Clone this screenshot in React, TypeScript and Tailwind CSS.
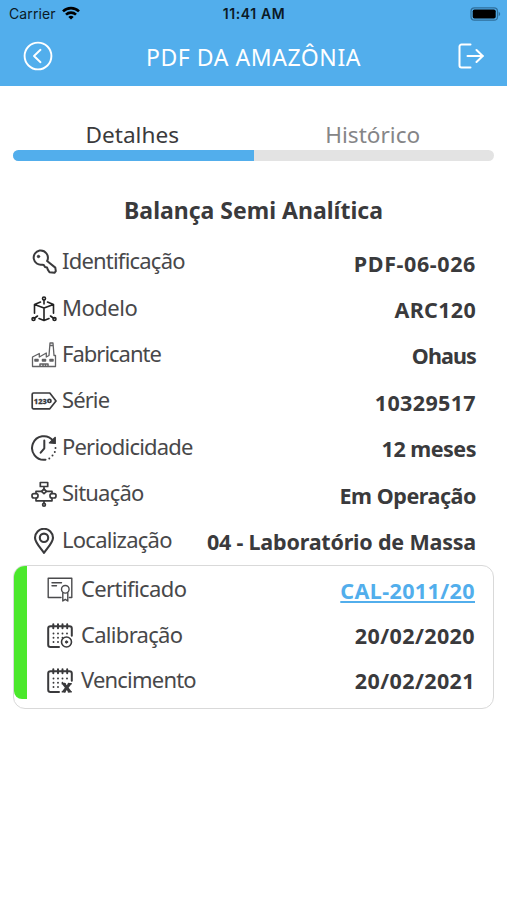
import type { ReactNode } from 'react'

const iconProps = {
  viewBox: '0 0 26 26',
  fill: 'none',
  stroke: '#3a3a3c',
  strokeWidth: 1.6,
  strokeLinecap: 'round' as const,
  strokeLinejoin: 'round' as const,
  className: 'w-[26px] h-[26px] mt-[4px] shrink-0',
}

const KeyIcon = () => (
  <svg {...iconProps} strokeWidth={2}>
    <path d="M8.600 1.500a7.200 7.200 0 1 0 2.600 14.200l1.600.3 1.200 2 2 .4.8 2.200 1.700 2.600 5 .6 1.300-1.600-.5-3.600-8.200-6.600A7.300 7.300 0 0 0 8.600 1.500z" />
    <circle cx="7.500" cy="7.500" r="1.200" fill="#3a3a3c" strokeWidth="1" />
  </svg>
)

const CubeIcon = () => (
  <svg {...iconProps} stroke="#222" strokeWidth={1.6}>
    <path d="M9.500 6 3.500 8.500 13 12l9.500-3.500-6-2.500M3.500 8.500v8.700M22.500 8.500v8.700M13 12v12.500M8 22.500l5 2 5-2M13 4v4M3 22.500l3.500-2.500M23 22.500 19.500 20" />
    <circle cx="13" cy="2.500" r="1.500" />
    <circle cx="2.500" cy="23" r="1.500" />
    <circle cx="23.500" cy="23" r="1.500" />
  </svg>
)

const FactoryIcon = () => (
  <svg {...iconProps} strokeWidth={1.3} stroke="#626264">
    <path d="M1.500 24.500V15l6.800-3.500V15l7-4V15l2.700-1.500L19 1h3l1 12.500h1.500v11zM19 3.500h3" />
    <path d="M4 17.500h3v1.500H4zM11.500 17.500h3v1.500h-3zM19 17.500h3v1.500h-3zM9 24.300V22h8v2.300M12 22v2.300M14.500 22v2.300" strokeWidth="1.500" />
  </svg>
)

const SerialIcon = () => (
  <svg {...iconProps} strokeWidth={1.7}>
    <path d="M2.500 5h16.300l6.200 7.900-6.200 7.900H2.500A1.300 1.300 0 0 1 1.200 19.500V6.300A1.300 1.300 0 0 1 2.500 5z" />
    <text x="2.800" y="15.600" fontSize="7.500" fontWeight="800" fontFamily="Noto Sans, sans-serif" fill="#3a3a3c" stroke="#3a3a3c" strokeWidth=".3" textLength="13" lengthAdjust="spacingAndGlyphs">123</text>
    <circle cx="18.400" cy="12.900" r="1.600" />
  </svg>
)

const PeriodIcon = () => (
  <svg {...iconProps} strokeWidth={2}>
    <path d="M14.500 24.700A11.800 11.800 0 1 1 22 5.500M13.300 5.500v7.800l-3.600 4.400" />
    <path d="M24.300 2.300v6.200l-6-.6z" fill="#3a3a3c" strokeWidth="1.200" />
    <path d="M24.500 13v.1M23.800 17v.1M21.500 20.500v.1M18.300 23.500v.1" strokeWidth="2" />
  </svg>
)

const FlowIcon = () => (
  <svg {...iconProps} strokeWidth={1.700}>
    <path d="M9.300 1.500h7.400v4H9.300zM13 5.500v2.700M10.300 10.300H5v2M15.700 10.300H21v2M5 17.300v2.500h16v-2.500M13 20v2.500" />
    <path d="m13 8 2.500 2.300-2.500 2.300-2.500-2.300z" />
    <rect x="1" y="12.600" width="6" height="4.400" rx="2" />
    <rect x="19" y="12.600" width="6" height="4.400" rx="2" />
    <circle cx="13" cy="23.700" r="1.400" />
  </svg>
)

const PinIcon = () => (
  <svg {...iconProps} strokeWidth={2.100}>
    <path d="M13 24.800C9.300 19.800 4 14.500 4 9.800a9 9 0 0 1 18 0c0 4.700-5.300 10-9 15z" />
    <circle cx="13" cy="9.800" r="4.200" />
  </svg>
)

const CertificateIcon = () => (
  <svg {...iconProps} strokeWidth={1.400} stroke="#4a4a4c">
    <path d="M14 20.500H1.200V1.300h23.600v19.200h-2.500M5 5.700h9.500M5 8.700h4.500" />
    <circle cx="18.300" cy="12.300" r="3.800" />
    <path d="M15.800 16v8l2.500-1.600 2.500 1.600v-8" />
  </svg>
)

const CalendarBase = () => (
  <>
    <path d="M12 24H3.500a2.300 2.300 0 0 1-2.300-2.300V5.500a2.300 2.300 0 0 1 2.300-2.300h19a2.300 2.300 0 0 1 2.300 2.300v7.200M6.300 1.200v4M11 1.200v4M15.500 1.200v4M20.200 1.200v4" />
    <path d="M6.500 10.500v.1M11 10.500v.1M15.500 10.500v.1M20 10.500v.1M6.500 14.700v.1M11 14.700v.1M15.500 14.700v.1M6.500 19v.1M11 19v.1" strokeWidth="1.900" />
  </>
)

const CalibrationIcon = () => (
  <svg {...iconProps} strokeWidth={2}>
    <CalendarBase />
    <circle cx="19.500" cy="19" r="5" strokeWidth="1.600" />
    <circle cx="19.500" cy="19" r="1.200" fill="#3a3a3c" strokeWidth=".8" />
  </svg>
)

const ExpiryIcon = () => (
  <svg {...iconProps} strokeWidth={2}>
    <CalendarBase />
    <path d="m16.500 15.500 6.500 8.300M23 15.500l-6.500 8.300" strokeWidth="3" strokeLinecap="butt" />
    <path d="M14.700 15.700h4M20.800 15.700h4M14.700 23.800h4M20.800 23.800h4" strokeWidth="1.600" strokeLinecap="butt" />
  </svg>
)

type Item = {
  icon: ReactNode
  label: string
  labelClass: string
  value: string
  valueClass: string
  link?: boolean
}

const details: Item[] = [
  { icon: <KeyIcon />, label: 'Identificação', labelClass: 'tracking-[-0.79px]', value: 'PDF-06-026', valueClass: 'tracking-[0.6px]' },
  { icon: <CubeIcon />, label: 'Modelo', labelClass: 'tracking-[-0.5px]', value: 'ARC120', valueClass: 'tracking-[0.3px]' },
  { icon: <FactoryIcon />, label: 'Fabricante', labelClass: 'tracking-[-1px]', value: 'Ohaus', valueClass: 'tracking-[-0.9px]' },
  { icon: <SerialIcon />, label: 'Série', labelClass: 'tracking-[-0.9px]', value: '10329517', valueClass: 'tracking-[0.35px]' },
  { icon: <PeriodIcon />, label: 'Periodicidade', labelClass: 'tracking-[-0.8px]', value: '12 meses', valueClass: 'tracking-[-0.5px]' },
  { icon: <FlowIcon />, label: 'Situação', labelClass: 'tracking-[-0.8px]', value: 'Em Operação', valueClass: 'tracking-[-0.45px]' },
  { icon: <PinIcon />, label: 'Localização', labelClass: 'tracking-[-0.75px]', value: '04 - Laboratório de Massa', valueClass: 'tracking-[-0.2px]' },
]

const certificate: Item[] = [
  { icon: <CertificateIcon />, label: 'Certificado', labelClass: 'tracking-[-0.6px]', value: 'CAL-2011/20', valueClass: 'tracking-[0.4px]', link: true },
  { icon: <CalibrationIcon />, label: 'Calibração', labelClass: 'tracking-[-0.7px]', value: '20/02/2020', valueClass: 'tracking-[0.4px]' },
  { icon: <ExpiryIcon />, label: 'Vencimento', labelClass: 'tracking-[-0.8px]', value: '20/02/2021', valueClass: 'tracking-[0.4px]' },
]

export default function App() {
  return (
    <div className="w-[507px] h-[900px] bg-white overflow-hidden text-[#3a3a3c] font-['Noto_Sans',sans-serif]">
      <header className="h-[86px] bg-[#52aeec]">
        <div className="grid grid-cols-3 items-center h-7 pl-[9px] pr-[6px] text-[#0b1a26] font-['Inter',sans-serif] text-sm">
          <div className="flex items-center gap-[6px] tracking-[0.1px]">
            <span>Carrier</span>
            <svg viewBox="0 0 18 14" className="w-[18px] h-[14px] -mt-[2px]" fill="none" stroke="#000" strokeWidth="2.600">
              <path d="M1 5.400a11.500 11.500 0 0 1 16 0M4 8.600a7.200 7.200 0 0 1 10 0" />
              <path d="M9 13.500 6.300 10.900a4 4 0 0 1 5.400 0z" fill="#000" stroke="none" />
            </svg>
          </div>
          <span className="-ml-[2px] text-center font-semibold tracking-[0.6px]">11:41 AM</span>
          <svg viewBox="0 0 31 14" className="w-[31px] h-[14px] -mt-[1px] justify-self-end">
            <rect x="1" y=".8" width="26.500" height="12.400" rx="3.500" fill="none" stroke="#2f6f9b" strokeWidth="1.200" />
            <rect x="2.700" y="2.500" width="23" height="9" rx="1.800" fill="#000" />
            <path d="M28.700 4.800c2 .8 2 3.600 0 4.400z" fill="#2f6f9b" />
          </svg>
        </div>
        <div className="flex items-center justify-between h-14 pl-[23px] pr-[23px]">
          <svg viewBox="0 0 30 30" className="w-[30px] h-[30px]" fill="none" stroke="#fff" strokeWidth="1.900" strokeLinecap="round" strokeLinejoin="round">
            <circle cx="15" cy="15" r="13.400" />
            <path d="m17.500 8.800-6.500 6.200 6.500 6.200" />
          </svg>
          <h1 className="-ml-[4px] pt-[2px] text-[23px] tracking-[0.55px] text-white">PDF DA AMAZÔNIA</h1>
          <svg viewBox="0 0 26 26" className="w-[26px] h-[26px]" fill="none" stroke="#fff" strokeWidth="2" strokeLinecap="round" strokeLinejoin="round">
            <path d="M12.500 1.500H3.500a2 2 0 0 0-2 2v19a2 2 0 0 0 2 2h9M9.500 13H25M18.500 7l6.200 6-6.200 6" />
          </svg>
        </div>
      </header>

      <nav className="mx-[13px] pt-[33px]">
        <div className="grid grid-cols-2 h-[31px] leading-8 text-center text-[22.600px]">
          <span className="-ml-[2px]">Detalhes</span>
          <span className="-ml-[2px] text-[#858587]">Histórico</span>
        </div>
        <div className="h-[11px] rounded-full bg-[#e3e3e3] overflow-hidden">
          <div className="w-1/2 h-full bg-[#52aeec]"></div>
        </div>
      </nav>

      <h2 className="h-[76px] pt-[33px] leading-8 text-center text-[23px] font-bold">Balança Semi Analítica</h2>

      <div className="pl-[31px] pr-[31px]">
        {details.map((item) => (
          <div key={item.label} className="flex items-center h-[46.4px]">
            {item.icon}
            <span className={`ml-[5px] pt-[1px] text-[22px] text-[#48484a] ${item.labelClass}`}>{item.label}</span>
            <span className={`ml-auto pt-[7px] text-[21.500px] font-bold whitespace-nowrap ${item.valueClass}`}>{item.value}</span>
          </div>
        ))}
      </div>

      <section className="flex mx-[13px] mt-[3px] h-[144px] border border-[#d9d9d9] rounded-xl overflow-hidden">
        <div className="w-[13px] h-[133px] bg-[#4be82c] rounded-bl-lg"></div>
        <div className="flex-1 pl-[20px] pr-[18px]">
          {certificate.map((item) => (
            <div key={item.label} className="flex items-center h-[45.200px]">
              {item.icon}
              <span className={`ml-[8px] pt-[1px] text-[22px] text-[#48484a] ${item.labelClass}`}>{item.label}</span>
              {item.link ? (
                <a href="#" className={`ml-auto pt-[5px] text-[21.500px] font-bold text-[#52aeec] underline ${item.valueClass}`}>{item.value}</a>
              ) : (
                <span className={`ml-auto pt-[5px] text-[21.500px] font-bold ${item.valueClass}`}>{item.value}</span>
              )}
            </div>
          ))}
        </div>
      </section>
    </div>
  )
}
